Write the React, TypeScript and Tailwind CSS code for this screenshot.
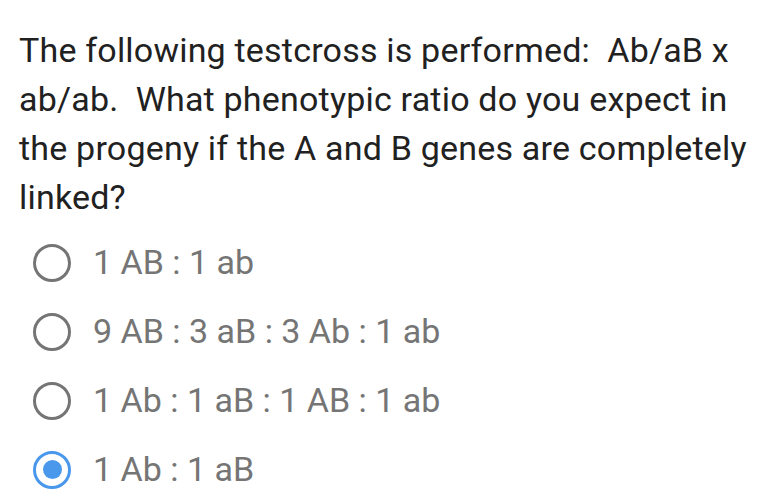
export default function App() {
  const options = [
    { label: "1 AB : 1 ab", checked: false },
    { label: "9 AB : 3 aB : 3 Ab : 1 ab", checked: false },
    { label: "1 Ab : 1 aB : 1 AB : 1 ab", checked: false },
    { label: "1 Ab : 1 aB", checked: true },
  ];

  return (
    <div
      className="h-[504px] w-[768px] overflow-hidden bg-white"
      style={{ fontFamily: "Roboto, sans-serif" }}
    >
      <p className="whitespace-pre-wrap px-[19px] pt-[26px] text-[34px] leading-[49px] tracking-[0.2px] text-[#212121]">
        {"The following testcross is performed:  Ab/aB x ab/ab.  What phenotypic ratio do you expect in the progeny if the A and B genes are completely linked?"}
      </p>
      <div className="mt-[6px] flex flex-col">
        {options.map((option) => (
          <div
            key={option.label}
            className="flex h-[69px] flex-row items-center pl-[33px]"
          >
            {option.checked ? (
              <div className="flex size-[38px] items-center justify-center rounded-full border-[3px] border-[#4A98EB]">
                <div className="size-[19px] rounded-full bg-[#4A98EB]"></div>
              </div>
            ) : (
              <div className="size-[38px] rounded-full border-[3px] border-[#757575]"></div>
            )}
            <span className="ml-[22px] text-[34px] text-[#757575]">
              {option.label}
            </span>
          </div>
        ))}
      </div>
    </div>
  );
}
